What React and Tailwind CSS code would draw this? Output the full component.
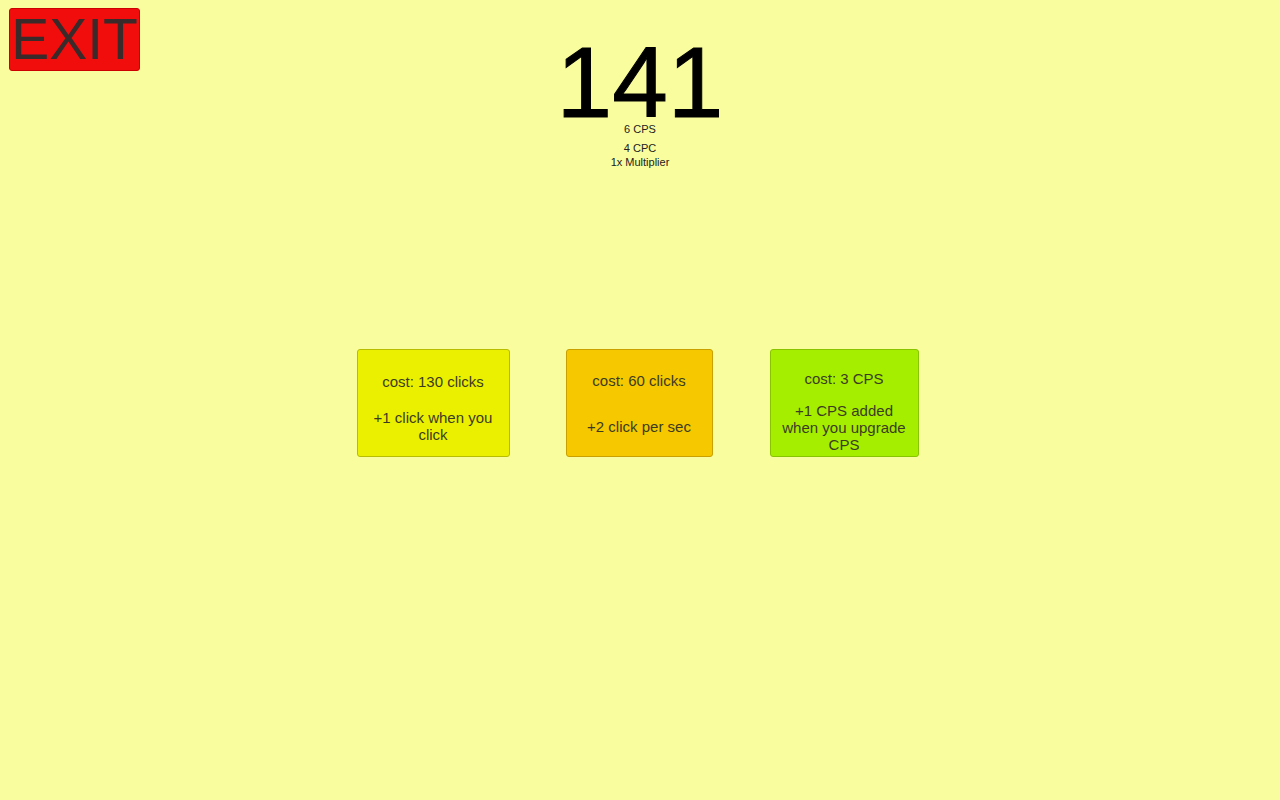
export default function App() {
  const font = { fontFamily: '"Liberation Sans", Arial, sans-serif' };
  return (
    <div className="min-h-[800px] w-full bg-[#f9fd9e]" style={font}>
      <div className="grid grid-cols-[1fr_auto_1fr]">
        <div className="pl-[9px] pt-[8px]">
          <button className="flex h-[63px] w-[131px] items-center justify-center rounded-[3px] border border-[#c00] bg-[#f20d0d] text-[57px] leading-none text-[#3a2a2a]">
            EXIT
          </button>
        </div>
        <div className="flex flex-col items-center pt-[42px] text-[#222]">
          <div className="text-[100px] leading-[80px] text-black [-webkit-text-stroke:1px_black]">141</div>
          <div className="text-[11px] leading-[14px]">6 CPS</div>
          <div className="mt-[5px] text-[11px] leading-[14px]">4 CPC</div>
          <div className="text-[11px] leading-[14px]">1x Multiplier</div>
        </div>
        <div />
      </div>
      <div className="mt-[180px] flex justify-center gap-[56px] pr-[5px]">
        <div className="flex h-[108px] w-[153px] flex-col items-center rounded-[3px] border border-[#b8bd00] bg-[#ebf000] pt-[23px] text-center text-[15px] leading-[17px] text-[#3b3b20]">
          <div>cost: 130 clicks</div>
          <div className="mt-[19px] px-[10px]">+1 click when you click</div>
        </div>
        <div className="flex h-[108px] w-[147px] flex-col items-center rounded-[3px] border border-[#c9a000] bg-[#f5c800] pt-[22px] text-center text-[15px] leading-[17px] text-[#3b3b20]">
          <div>cost: 60 clicks</div>
          <div className="mt-[29px]">+2 click per sec</div>
        </div>
        <div className="ml-[1px] flex h-[108px] w-[149px] flex-col items-center rounded-[3px] border border-[#88c400] bg-[#a6ee00] pt-[20px] text-center text-[15px] leading-[17px] text-[#3b3b20]">
          <div>cost: 3 CPS</div>
          <div className="mt-[15px] px-[7px]">+1 CPS added when you upgrade CPS</div>
        </div>
      </div>
    </div>
  );
}
